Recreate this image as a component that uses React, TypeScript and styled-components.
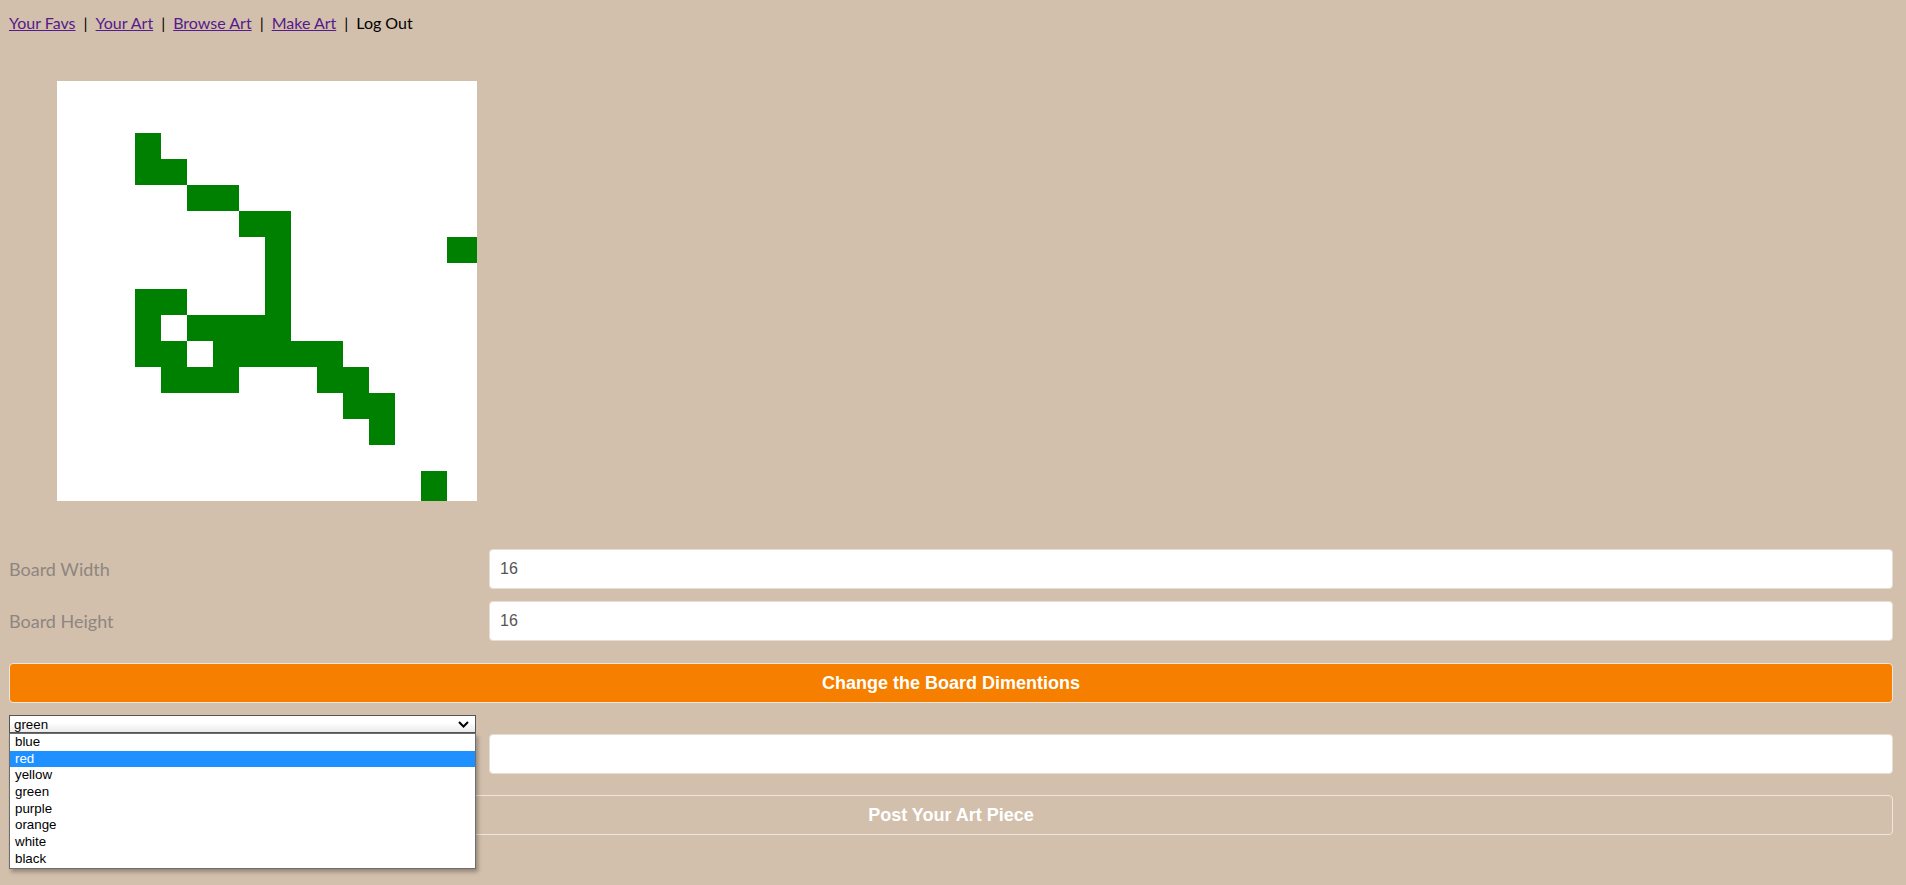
import React from 'react';
import styled, { createGlobalStyle } from 'styled-components';

const GlobalStyle = createGlobalStyle`
  html, body {
    background: #d3c0ac;
  }
  body {
    margin: 8px;
    font-family: Lato, "Segoe UI", sans-serif;
  }
  #root {
    min-height: calc(100vh - 16px);
  }
`;

const Nav = styled.nav`
  display: flex;
  align-items: center;
  height: 22px;
  margin-top: 4px;
  padding-left: 1px;
  font-size: 16px;
  line-height: 22px;
`;

const NavLink = styled.a`
  color: #551a8b;
  text-decoration: underline;
`;

const Separator = styled.span`
  margin: 0 8px;
  color: #000;
`;

const NavText = styled.span`
  color: #000;
`;

const Board = styled.div`
  display: grid;
  grid-template-columns: repeat(15, 26px) 30px;
  grid-template-rows: repeat(15, 26px) 30px;
  width: 420px;
  height: 420px;
  margin: 47px 0 0 49px;
  background: #fff;
`;

const Cell = styled.div<{ $color: string }>`
  background: ${(p) => p.$color};
`;

const Form = styled.form`
  display: flex;
  flex-direction: column;
  margin: 48px 5px 0 1px;
  padding-bottom: 40px;
`;

const Row = styled.div<{ $top?: number }>`
  display: flex;
  align-items: center;
  margin-top: ${(p) => p.$top ?? 0}px;
`;

const Label = styled.label`
  flex: 0 0 480px;
  font-size: 18px;
  color: #8d8680;
`;

const Input = styled.input`
  flex: 1;
  height: 40px;
  box-sizing: border-box;
  padding: 0 10px;
  border: 1px solid #e7ddd3;
  border-radius: 4px;
  background: #fff;
  font-family: "Liberation Sans", Arial, sans-serif;
  font-size: 16px;
  color: #555;
  outline: none;
`;

const Button = styled.button<{ $filled?: boolean; $top: number }>`
  width: 100%;
  height: 40px;
  margin-top: ${(p) => p.$top}px;
  box-sizing: border-box;
  border: 1px solid #efe6dc;
  border-radius: 4px;
  background: ${(p) => (p.$filled ? '#f77f00' : 'transparent')};
  color: #fff;
  font-family: "Liberation Sans", Arial, sans-serif;
  font-size: 18px;
  font-weight: bold;
  cursor: pointer;
`;

const SelectWrap = styled.div`
  position: relative;
  width: 467px;
  height: 18px;
  margin-top: 12px;
  z-index: 2;
`;

const SelectBox = styled.div`
  display: flex;
  align-items: center;
  justify-content: space-between;
  height: 100%;
  box-sizing: border-box;
  padding: 0 6px 0 4px;
  border: 1px solid #555;
  background: linear-gradient(#ffffff 40%, #ebebeb);
  font-family: "Liberation Sans", Arial, sans-serif;
  font-size: 13.33px;
  color: #000;
`;

const OptionList = styled.ul`
  position: absolute;
  top: 100%;
  left: 0;
  width: 100%;
  margin: 0;
  padding: 0;
  box-sizing: border-box;
  list-style: none;
  border: 1px solid #6d6d6d;
  background: #fff;
  box-shadow: 2px 3px 4px rgba(0, 0, 0, 0.3);
  font-family: "Liberation Sans", Arial, sans-serif;
  font-size: 13.33px;
`;

const Option = styled.li<{ $active?: boolean }>`
  height: 16.7px;
  line-height: 16.7px;
  padding-left: 5px;
  background: ${(p) => (p.$active ? '#1e90ff' : 'transparent')};
  color: ${(p) => (p.$active ? '#fff' : '#000')};
`;

const SIZE = 16;

const filled: [number, number][] = [
  [2, 3],
  [3, 3], [3, 4],
  [4, 5], [4, 6],
  [5, 7], [5, 8],
  [6, 8], [6, 15],
  [7, 8],
  [8, 3], [8, 4], [8, 8],
  [9, 3], [9, 5], [9, 6], [9, 7], [9, 8],
  [10, 3], [10, 4], [10, 6], [10, 7], [10, 8], [10, 9], [10, 10],
  [11, 4], [11, 5], [11, 6], [11, 10], [11, 11],
  [12, 11], [12, 12],
  [13, 12],
  [15, 14],
];

const colors = ['blue', 'red', 'yellow', 'green', 'purple', 'orange', 'white', 'black'];

const Chevron = () => (
  <svg width="11" height="7" viewBox="0 0 11 7">
    <polyline points="1,1 5.5,5.5 10,1" fill="none" stroke="#000" strokeWidth="2" />
  </svg>
);

const App: React.FC = () => {
  const painted = new Set(filled.map(([r, c]) => r * SIZE + c));
  const cells = Array.from({ length: SIZE * SIZE }, (_, i) => (
    <Cell key={i} $color={painted.has(i) ? 'green' : 'white'} />
  ));

  return (
    <>
      <GlobalStyle />
      <Nav>
        <NavLink href="#">Your Favs</NavLink>
        <Separator>|</Separator>
        <NavLink href="#">Your Art</NavLink>
        <Separator>|</Separator>
        <NavLink href="#">Browse Art</NavLink>
        <Separator>|</Separator>
        <NavLink href="#">Make Art</NavLink>
        <Separator>|</Separator>
        <NavText>Log Out</NavText>
      </Nav>

      <Board>{cells}</Board>

      <Form onSubmit={(e) => e.preventDefault()}>
        <Row>
          <Label>Board Width</Label>
          <Input defaultValue="16" />
        </Row>
        <Row $top={12}>
          <Label>Board Height</Label>
          <Input defaultValue="16" />
        </Row>
        <Button type="button" $filled $top={22}>
          Change the Board Dimentions
        </Button>

        <SelectWrap>
          <SelectBox>
            <span>green</span>
            <Chevron />
          </SelectBox>
          <OptionList>
            {colors.map((c) => (
              <Option key={c} $active={c === 'red'}>
                {c}
              </Option>
            ))}
          </OptionList>
        </SelectWrap>

        <Row $top={1}>
          <Label />
          <Input />
        </Row>
        <Button type="submit" $top={21}>
          Post Your Art Piece
        </Button>
      </Form>
    </>
  );
};

export default App;
